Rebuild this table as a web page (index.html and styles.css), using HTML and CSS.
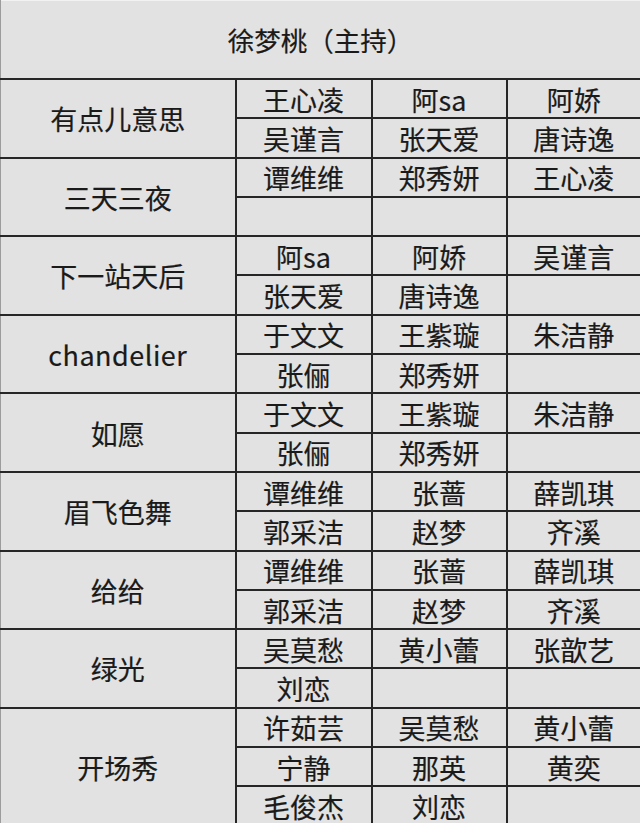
FILE: index.html
```html
<!DOCTYPE html>
<html lang="zh">
<head>
<meta charset="utf-8">
<link rel="stylesheet" href="styles.css">
</head>
<body>
<table class="roster">
  <colgroup>
    <col class="c-song"><col class="c-name"><col class="c-name2"><col class="c-name3">
  </colgroup>
  <tr class="head"><td colspan="4">徐梦桃（主持）</td></tr>
  <tr><td class="song" rowspan="2">有点儿意思</td><td>王心凌</td><td>阿sa</td><td class="last">阿娇</td></tr>
  <tr><td>吴谨言</td><td>张天爱</td><td class="last">唐诗逸</td></tr>
  <tr><td class="song" rowspan="2">三天三夜</td><td>谭维维</td><td>郑秀妍</td><td class="last">王心凌</td></tr>
  <tr><td></td><td></td><td class="last"></td></tr>
  <tr><td class="song" rowspan="2">下一站天后</td><td>阿sa</td><td>阿娇</td><td class="last">吴谨言</td></tr>
  <tr><td>张天爱</td><td>唐诗逸</td><td class="last"></td></tr>
  <tr><td class="song latin" rowspan="2">chandelier</td><td>于文文</td><td>王紫璇</td><td class="last">朱洁静</td></tr>
  <tr><td>张俪</td><td>郑秀妍</td><td class="last"></td></tr>
  <tr><td class="song" rowspan="2">如愿</td><td>于文文</td><td>王紫璇</td><td class="last">朱洁静</td></tr>
  <tr><td>张俪</td><td>郑秀妍</td><td class="last"></td></tr>
  <tr><td class="song" rowspan="2">眉飞色舞</td><td>谭维维</td><td>张蔷</td><td class="last">薛凯琪</td></tr>
  <tr><td>郭采洁</td><td>赵梦</td><td class="last">齐溪</td></tr>
  <tr><td class="song" rowspan="2">给给</td><td>谭维维</td><td>张蔷</td><td class="last">薛凯琪</td></tr>
  <tr><td>郭采洁</td><td>赵梦</td><td class="last">齐溪</td></tr>
  <tr><td class="song" rowspan="2">绿光</td><td>吴莫愁</td><td>黄小蕾</td><td class="last">张歆艺</td></tr>
  <tr><td>刘恋</td><td></td><td class="last"></td></tr>
  <tr><td class="song" rowspan="3">开场秀</td><td>许茹芸</td><td>吴莫愁</td><td class="last">黄小蕾</td></tr>
  <tr><td>宁静</td><td>那英</td><td class="last">黄奕</td></tr>
  <tr><td>毛俊杰</td><td>刘恋</td><td class="last"></td></tr>
</table>
</body>
</html>
```

FILE: styles.css
```css
html, body {
  margin: 0;
  padding: 0;
  background: #e2e2e2;
}

body {
  font-family: "Noto Sans CJK SC", "Noto Sans", sans-serif;
  color: #1a1a1a;
  overflow: hidden;
}

.roster {
  border-collapse: collapse;
  table-layout: fixed;
  width: 640px;
  background: #e2e2e2;
  border-top: 1px solid #f2f2f2;
}

.c-song { width: 235px; }
.c-name { width: 136px; }
.c-name2 { width: 135px; }
.c-name3 { width: 134px; }

.roster td {
  border: 2px solid #262626;
  height: 35.3px;
  padding: 2px 0 0;
  text-align: center;
  vertical-align: middle;
  font-size: 27px;
  line-height: 30px;
  white-space: nowrap;
  overflow: hidden;
  -webkit-text-stroke: 0.2px #1a1a1a;
}

.roster .head td {
  height: 77px;
  font-size: 26.5px;
  border-left: 1px solid #9c9c9c;
  border-right: 1px solid #c8c8c8;
  border-top: none;
  padding: 0;
}

.roster td.song {
  border-left: 1px solid #9c9c9c;
}

.roster td.last {
  border-right: 1px solid #c8c8c8;
}

.roster td.latin {
  letter-spacing: 0.5px;
}
```
